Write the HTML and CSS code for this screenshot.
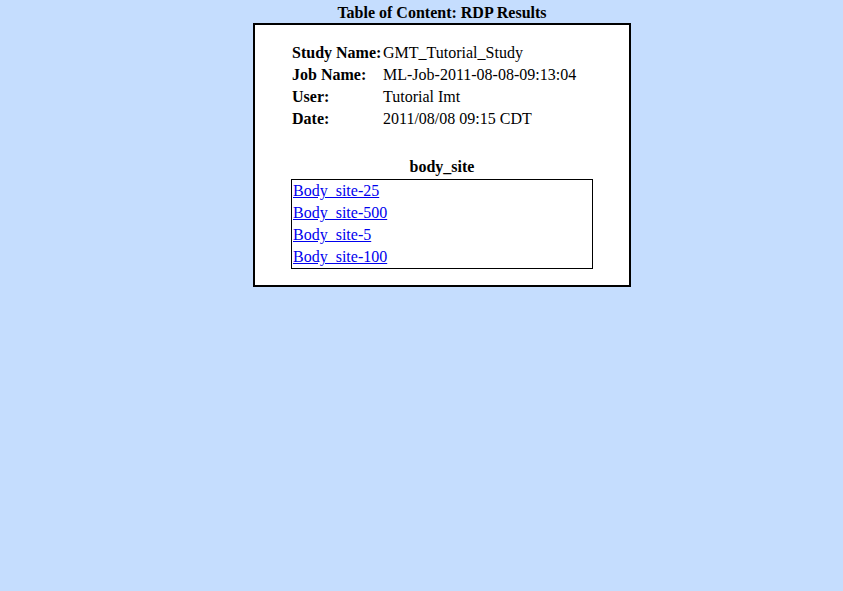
FILE: index.html
```html
<!DOCTYPE html>
<html>
<head>
<meta charset="utf-8">
<title>Table of Content: RDP Results</title>
<link rel="stylesheet" href="styles.css">
</head>
<body>
<div class="page">
  <h1 class="title">Table of Content: RDP Results</h1>
  <div class="box">
    <div class="info">
      <div class="label">Study Name:</div><div class="value">GMT_Tutorial_Study</div>
      <div class="label">Job Name:</div><div class="value">ML-Job-2011-08-08-09:13:04</div>
      <div class="label">User:</div><div class="value">Tutorial Imt</div>
      <div class="label">Date:</div><div class="value">2011/08/08 09:15 CDT</div>
    </div>
    <div class="group">
      <div class="group-title">body_site</div>
      <div class="links">
        <a href="#">Body_site-25</a>
        <a href="#">Body_site-500</a>
        <a href="#">Body_site-5</a>
        <a href="#">Body_site-100</a>
      </div>
    </div>
  </div>
</div>
</body>
</html>
```
FILE: styles.css
```css
html, body {
  margin: 0;
  padding: 0;
  background: #c5ddfe;
  font-family: "Liberation Serif", "Times New Roman", serif;
  color: #000;
}
.page {
  width: 378px;
  margin-left: 253px;
  padding-top: 4px;
}
.title {
  margin: 0;
  font-size: 16px;
  font-weight: bold;
  text-align: center;
  line-height: 18px;
  height: 19px;
}
.box {
  background: #fff;
  border: 2px solid #000;
  padding: 17px 36px 16px 37px;
}
.info {
  display: grid;
  grid-template-columns: 91px auto;
  font-size: 16px;
  line-height: 22px;
}
.label {
  font-weight: bold;
}
.group {
  margin-top: 26px;
  width: 302px;
  margin-left: -1px;
}
.group-title {
  text-align: center;
  font-weight: bold;
  font-size: 16px;
  line-height: 22px;
  height: 23px;
}
.links {
  border: 1px solid #000;
  display: flex;
  flex-direction: column;
  padding: 0 1px;
  font-size: 16px;
  line-height: 22px;
}
.links a {
  color: #0000ee;
  text-decoration: underline;
  align-self: flex-start;
}
```
